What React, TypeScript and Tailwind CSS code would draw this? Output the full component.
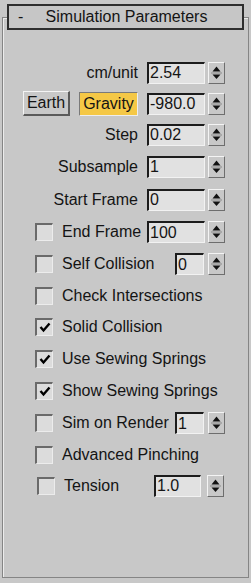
import React from "react";

const font = { fontFamily: '"Liberation Sans", Arial, sans-serif' };

function Spinner() {
  return (
    <div className="w-[17px] h-[22px] bg-[#c8c8c8] border-t border-l border-t-[#f4f4f4] border-l-[#f4f4f4] border-b border-r border-b-[#6e6e6e] border-r-[#6e6e6e] flex items-center justify-center">
      <svg width="13" height="18" viewBox="0 0 13 18">
        <path d="M6.5 2.5 L10.5 7.5 L2.5 7.5 Z" fill="#111" />
        <line x1="1" y1="9" x2="12" y2="9" stroke="#8a8a8a" strokeWidth="1" />
        <path d="M2.5 10.5 L10.5 10.5 L6.5 15 Z" fill="#111" />
      </svg>
    </div>
  );
}

function Field({ value, w = "w-[58px]" }: { value: string; w?: string }) {
  return (
    <div
      className={`${w} h-[22px] bg-[#e1e1e1] border-t-2 border-l-2 border-t-[#1c1c1c] border-l-[#1c1c1c] border-b border-r border-b-[#f2f2f2] border-r-[#f2f2f2] flex items-center pl-[1px] text-[16px] leading-none text-[#151515]`}
    >
      {value}
    </div>
  );
}

function Check({ checked }: { checked?: boolean }) {
  return (
    <div className="w-[18px] h-[18px] bg-[#dcdcdc] border-t-2 border-l-2 border-t-[#6a6a6a] border-l-[#6a6a6a] border-b border-r border-b-[#ececec] border-r-[#ececec] flex items-center justify-center">
      {checked && (
        <svg width="12" height="11" viewBox="0 0 12 11">
          <path d="M1.5 5 L4.5 8.5 L10.5 1.5" fill="none" stroke="#000" strokeWidth="2.4" />
        </svg>
      )}
    </div>
  );
}

function LabelRow({ label, value, h }: { label: string; value: string; h: string }) {
  return (
    <div className={`flex items-center ${h}`}>
      <div className="w-[135px] text-right">{label}</div>
      <div className="ml-[9px]">
        <Field value={value} />
      </div>
      <div className="ml-[3px]">
        <Spinner />
      </div>
    </div>
  );
}

function CheckRow({
  label,
  checked,
  h,
  labelW = "",
  children,
}: {
  label: string;
  checked?: boolean;
  h: string;
  labelW?: string;
  children?: React.ReactNode;
}) {
  return (
    <div className={`flex items-center ${h}`}>
      <div className="ml-[32px]">
        <Check checked={checked} />
      </div>
      <div className={`ml-[9px] whitespace-nowrap ${labelW}`}>{label}</div>
      {children}
    </div>
  );
}

export default function App() {
  return (
    <div className="w-[251px] h-[583px] bg-[#c8c8c8] text-[#141414] text-[16px] pt-[17px]" style={font}>
      <div className="mx-[2px] h-[561px] border border-[#858585] shadow-[inset_1px_1px_0_#ececec]">
        {/* Rollout title */}
        <div className="-mt-[14px] mx-[4px] h-[26px] bg-[#c6c6c6] border-2 border-[#2e2e2e] flex items-center">
          <span className="w-[22px] pl-[9px]">-</span>
          <span className="flex-1 text-center pr-[20px]">Simulation Parameters</span>
        </div>

        <div className="mt-[27px]">
          <LabelRow label="cm/unit" value="2.54" h="h-[31px]" />

          <div className="flex items-center h-[31px]">
            <div className="ml-[20px] w-[47px] h-[25px] bg-[#c8c8c8] border-t border-l border-t-[#f4f4f4] border-l-[#f4f4f4] border-b-2 border-r-2 border-b-[#5a5a5a] border-r-[#5a5a5a] flex items-center justify-center">
              Earth
            </div>
            <div className="ml-[9px] w-[59px] h-[24px] bg-[#f5c846] border-t border-l border-t-[#7a7a7a] border-l-[#7a7a7a] border-b border-r border-b-[#eeeeee] border-r-[#eeeeee] flex items-center justify-center">
              Gravity
            </div>
            <div className="ml-[9px]">
              <Field value="-980.0" />
            </div>
            <div className="ml-[3px]">
              <Spinner />
            </div>
          </div>

          <LabelRow label="Step" value="0.02" h="h-[31px]" />
          <LabelRow label="Subsample" value="1" h="h-[33px]" />
          <LabelRow label="Start Frame" value="0" h="h-[33px]" />

          <CheckRow label="End Frame" h="h-[32px]" labelW="w-[85px]">
            <Field value="100" />
            <div className="ml-[3px]">
              <Spinner />
            </div>
          </CheckRow>

          <CheckRow label="Self Collision" h="h-[32px]" labelW="w-[113px]">
            <Field value="0" w="w-[29px]" />
            <div className="ml-[4px]">
              <Spinner />
            </div>
          </CheckRow>

          <CheckRow label="Check Intersections" h="h-[31px]" />
          <CheckRow label="Solid Collision" checked h="h-[32px]" />
          <CheckRow label="Use Sewing Springs" checked h="h-[31px]" />
          <CheckRow label="Show Sewing Springs" checked h="h-[33px]" />

          <CheckRow label="Sim on Render" h="h-[32px]" labelW="w-[113px]">
            <Field value="1" w="w-[29px]" />
            <div className="ml-[4px]">
              <Spinner />
            </div>
          </CheckRow>

          <CheckRow label="Advanced Pinching" h="h-[31px]" />

          <div className="flex items-center h-[31px]">
            <div className="ml-[34px]">
              <Check />
            </div>
            <div className="ml-[9px] w-[90px]">Tension</div>
            <Field value="1.0" w="w-[47px]" />
            <div className="ml-[6px]">
              <Spinner />
            </div>
          </div>
        </div>
      </div>
    </div>
  );
}
